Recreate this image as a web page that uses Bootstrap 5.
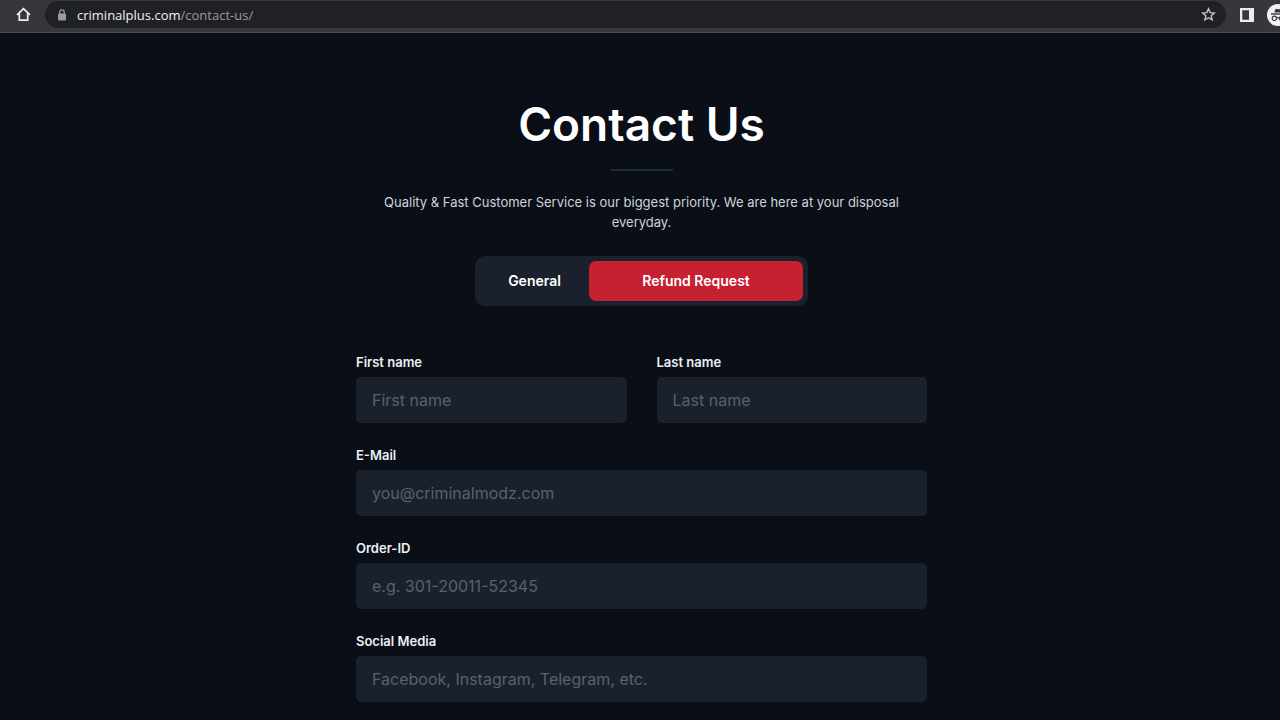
<!DOCTYPE html>
<html lang="en">
<head>
<meta charset="utf-8">
<meta name="viewport" content="width=device-width, initial-scale=1">
<title>Contact Us</title>
<link href="https://cdn.jsdelivr.net/npm/bootstrap@5.3.0/dist/css/bootstrap.min.css" rel="stylesheet">
<style>
body { background: #0a0e17; color: #fff; font-family: Inter, "Liberation Sans", sans-serif; }
.browser-bar { height: 33px; padding: 0 0 3px 16px; background: #36373b; border-bottom: 1px solid #4b4e54; }
.bar-btn { display: block; padding: 0; border: 0; background: none; line-height: 0; flex-shrink: 0; }
.home-btn { margin-right: 14px; }
.address { height: 27px; padding: 0 10px 0 12px; border-radius: 14px; background: #202124; margin-right: 14px; }
.url { font: 13px/20px "Open Sans", "Noto Sans", sans-serif; color: #999b9e; margin-left: 10px; }
.url span { color: #f1f2f3; }
.avatar-btn { margin: 0 -9px 0 13px; }
.contact { max-width: 574px; padding-left: 3px; padding-top: 63px; }
.title { font-size: 46px; line-height: 56px; font-weight: 600; margin-bottom: 17px; }
.rule { width: 62px; height: 2px; background: #1c2936; opacity: 1; border: 0; margin: 0 auto 21px; }
.intro { font-size: 13px; line-height: 20px; color: #d0d3da; margin-bottom: 24px; }
.switcher { background: #1a202c; border-radius: 10px; padding: 5px; }
.switcher .btn { height: 40px; padding: 0; border: 0; border-radius: 7px; color: #fff; font-size: 14px; line-height: 20px; font-weight: 600; }
.tab-general { width: 109px; }
.tab-refund { width: 214px; }
.switcher .active { background: #c62033; }
.fields { margin-top: 24px; padding-bottom: 16px; --bs-gutter-x: 30px; --bs-gutter-y: 22px; }
.form-label { display: block; font-size: 13px; line-height: 20px; font-weight: 600; color: #eceef4; margin-bottom: 5px; }
.form-control, .form-control:focus { height: 46px; padding: 0 16px; border: 0; border-radius: 5px; background: #1a212d; color: #fff; font-size: 16px; }
.form-control::placeholder { color: #59616c; opacity: 1; }
</style>
</head>
<body>
<header class="browser-bar d-flex align-items-center overflow-hidden">
  <button class="bar-btn home-btn" type="button" aria-label="Home">
    <svg width="15" height="15" viewBox="0 0 15 15" fill="none" stroke="#eee" stroke-width="1.7"><path d="M1 7.8 7.5 1.6 14 7.8M3.3 6v7.2h8.4V6"/></svg>
  </button>
  <div class="address d-flex align-items-center flex-grow-1">
    <svg width="10" height="12" viewBox="0 0 10 12"><rect x="1" y="4.5" width="8" height="7" rx="1" fill="#999b9e"/><path d="M2.8 5V3a2.2 2.2 0 0 1 4.4 0v2" fill="none" stroke="#999b9e" stroke-width="1.3"/></svg>
    <div class="url flex-grow-1"><span>criminalplus.com</span>/contact-us/</div>
    <button class="bar-btn" type="button" aria-label="Bookmark this page">
      <svg width="15" height="15" viewBox="0 0 15 15" fill="none" stroke="#c5c6c8" stroke-width="1.4"><path d="m7.5 1.8 1.7 3.8 4.2.4-3.2 2.8.9 4.1-3.6-2.2-3.6 2.2.9-4.1L1.6 6l4.2-.4z"/></svg>
    </button>
  </div>
  <button class="bar-btn" type="button" aria-label="Side panel">
    <svg width="14" height="14" viewBox="0 0 14 14"><path fill="#ebecee" fill-rule="evenodd" d="M0 0h14v14H0zM2.3 2.3v9.4H9V2.3z"/></svg>
  </button>
  <button class="bar-btn avatar-btn" type="button" aria-label="Incognito">
    <svg width="22" height="22" viewBox="0 0 22 22"><circle cx="11" cy="11" r="11" fill="#f1f2f3"/><path d="M7.4 8.6 8.5 4.8q2.5.9 5 0l1.1 3.8z" fill="#35363a"/><path d="M4 10h14" stroke="#35363a" stroke-width="1.4"/><g fill="none" stroke="#35363a" stroke-width="1.1"><circle cx="7.4" cy="14.3" r="2.2"/><circle cx="14.6" cy="14.3" r="2.2"/><path d="M9.6 14q1.4-.8 2.8 0"/></g></svg>
  </button>
</header>

<main>
  <div class="contact mx-auto">
    <div class="text-center">
      <h1 class="title">Contact Us</h1>
      <hr class="rule">
      <p class="intro">Quality &amp; Fast Customer Service is our biggest priority. We are here at your disposal everyday.</p>
      <div class="switcher d-inline-flex align-top" role="group" aria-label="Request type">
        <button class="btn tab-general" type="button">General</button>
        <button class="btn tab-refund active" type="button" aria-pressed="true">Refund Request</button>
      </div>
    </div>
    <form class="row fields">
      <div class="col-6">
        <label class="form-label" for="first">First name</label>
        <input class="form-control" id="first" type="text" placeholder="First name">
      </div>
      <div class="col-6">
        <label class="form-label" for="last">Last name</label>
        <input class="form-control" id="last" type="text" placeholder="Last name">
      </div>
      <div class="col-12">
        <label class="form-label" for="email">E-Mail</label>
        <input class="form-control" id="email" type="email" placeholder="you@criminalmodz.com">
      </div>
      <div class="col-12">
        <label class="form-label" for="order">Order-ID</label>
        <input class="form-control" id="order" type="text" placeholder="e.g. 301-20011-52345">
      </div>
      <div class="col-12">
        <label class="form-label" for="social">Social Media</label>
        <input class="form-control" id="social" type="text" placeholder="Facebook, Instagram, Telegram, etc.">
      </div>
    </form>
  </div>
</main>
<script src="https://cdn.jsdelivr.net/npm/bootstrap@5.3.0/dist/js/bootstrap.bundle.min.js"></script>
</body>
</html>
